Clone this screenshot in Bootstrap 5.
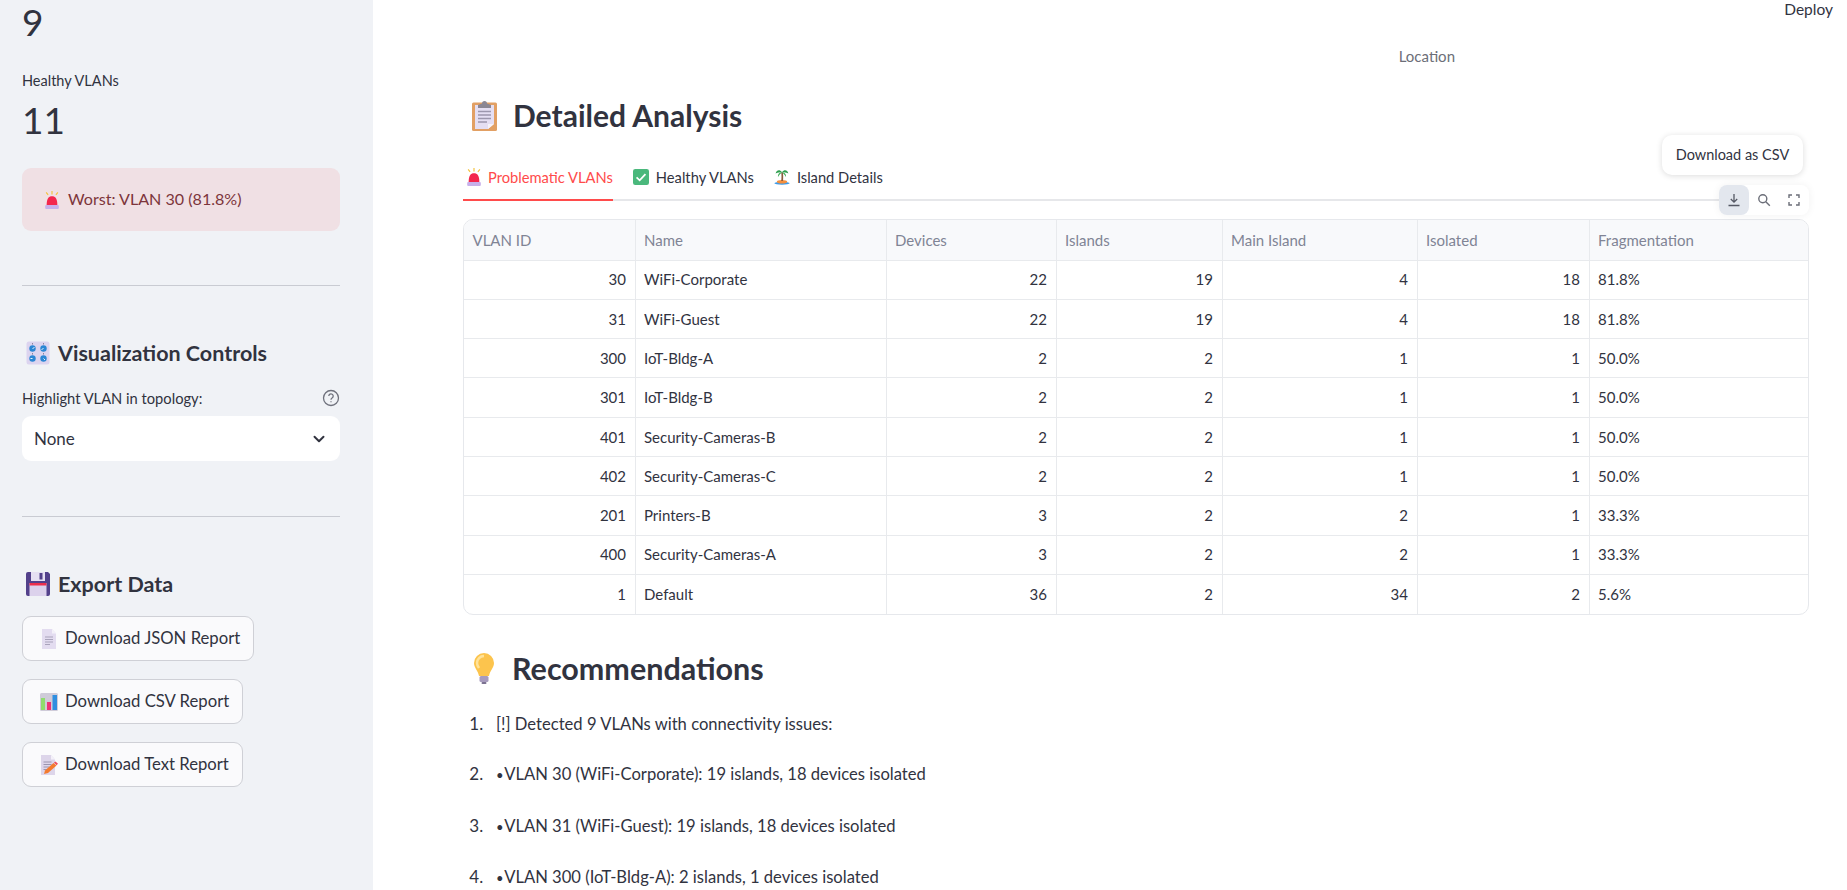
<!DOCTYPE html>
<html lang="en">
<head>
  <meta charset="UTF-8">
  <title>VLAN Analysis</title>
  <link href="https://cdn.jsdelivr.net/npm/bootstrap@5.3.2/dist/css/bootstrap.min.css" rel="stylesheet">
  <style>
    html, body { height: 100%; overflow: hidden; }
    body { font-family: "Lato", "Liberation Sans", sans-serif; color: #31333f; background: #fff; }

    .side-panel { width: 373px; height: 890px; flex: none; background: #f0f2f6; padding: 0 33px 0 22px; overflow: hidden; }
    .metric-num { font-size: 37px; line-height: 40px; color: #31333f; }
    .metric-label { font-size: 14.5px; line-height: 20px; color: #31333f; margin-top: 29px; }
    .first-num { margin-top: 2px; }
    .second-num { margin-top: 9px; }
    .alert-worst { height: 63px; margin: 28px 0 0; padding: 0 23px; background: #f0e0e4; color: #7d353b; border: 0; border-radius: 9px; font-size: 16.1px; display: flex; align-items: center; gap: 9px; }
    .side-rule { margin: 0; border: 0; border-top: 1px solid #c9cbd2; opacity: 1; }
    .rule-one { margin-top: 54px; }
    .rule-two { margin-top: 55px; }
    .side-head { font-size: 21.5px; font-weight: 700; line-height: 28px; padding-left: 4px; gap: 8px; margin-top: 53px; }
    .field-label { font-size: 14.7px; line-height: 20px; color: #31333f; margin-top: 21px; margin-bottom: 8px; }
    .form-select.vlan-pick { height: 45px; border: 0; border-radius: 9px; font-size: 17px; padding: 0 12px; color: #31333f; background-position: right 13px center; background-size: 16px 12px;
      background-image: url("data:image/svg+xml,%3csvg xmlns='http://www.w3.org/2000/svg' viewBox='0 0 16 16'%3e%3cpath fill='none' stroke='%2331333f' stroke-linecap='round' stroke-linejoin='round' stroke-width='2.6' d='m2 5 6 6 6-6'/%3e%3c/svg%3e"); }
    .report-stack { gap: 18px; margin-top: 18px; }
    .btn.report-btn { height: 45px; padding: 0 13px 0 18px; background: #fafafc; border: 1px solid #cfd0d6; border-radius: 9px; color: #31333f; font-size: 16.7px; gap: 8px; }
    .emoji-slot { width: 16px; display: flex; justify-content: center; }
    .emoji-slot svg { flex: none; }

    .main-pane { position: relative; padding: 0 38px 0 90px; }
    .deploy-link { position: absolute; top: -1px; right: 14px; font-size: 15.5px; line-height: 20px; color: #31333f; }
    .axis-label { padding: 46px 354px 0 0; font-size: 15px; line-height: 20px; color: #6c6e78; text-align: right; }
    .page-head { font-size: 30.5px; font-weight: 700; line-height: 40px; padding-left: 9px; gap: 16px; }
    .head-analysis { margin-top: 29px; font-size: 30px; }
    .head-recs { margin-top: 33px; }

    .nav.result-tabs { border-bottom: 2px solid #e6e7ea; gap: 20px; height: 46px; margin-top: 20px; font-size: 14.7px; }
    .result-tabs .nav-link { padding: 0; height: 46px; color: #31333f; gap: 7px; border-bottom: 2px solid transparent; }
    .result-tabs .nav-link.active { color: #ff4b4b; border-bottom-color: #ff4b4b; padding-left: 4px; }

    .grid-wrap { margin-top: 18px; border: 1px solid #e6e8ec; border-radius: 10px; overflow: hidden; }
    .table.vlan-grid { table-layout: fixed; margin: 0; font-size: 15px; color: #31333f; }
    .vlan-grid th, .vlan-grid td { height: 39.3px; padding: 0 8.5px; vertical-align: middle; border: 0; border-right: 1px solid #e8eaed; border-bottom: 1px solid #e8eaed; }
    .vlan-grid th:last-child, .vlan-grid td:last-child { border-right: 0; }
    .vlan-grid tr:last-child td { border-bottom: 0; }
    .vlan-grid th { height: 40px; background: #f8f9fb; color: #808495; font-weight: 400; }
    .vlan-grid th:nth-child(1) { width: 171px; }
    .vlan-grid th:nth-child(2) { width: 251px; }
    .vlan-grid th:nth-child(3) { width: 170px; }
    .vlan-grid th:nth-child(4) { width: 166px; }
    .vlan-grid th:nth-child(5) { width: 195px; }
    .vlan-grid th:nth-child(6) { width: 172px; }

    .grid-tools { position: absolute; top: 185px; right: 38px; height: 30px; background: #fff; border-radius: 8px; box-shadow: 0 0 8px rgba(0,0,0,.06); }
    .grid-tools span { width: 30px; height: 30px; border-radius: 8px; display: flex; align-items: center; justify-content: center; }
    .grid-tools span.on { background: #e3e7ee; }
    .tip-csv { position: absolute; top: 135px; right: 44px; height: 40px; width: 141px; background: #fff; border-radius: 10px; box-shadow: 0 1px 6px rgba(0,0,0,.14); font-size: 14.5px; display: flex; align-items: center; justify-content: center; }

    .rec-list { margin: 22px 0 0; padding-left: 33px; font-size: 16.6px; line-height: 28px; }
    .rec-list li { margin-bottom: 22.5px; }
    .rec-list li::marker { content: counter(list-item) ".\2003"; font-size: 17px; }
    .dot-mark { font-size: 13px; margin-right: -3px; }
  </style>
</head>
<body>

<svg width="0" height="0" class="d-block position-absolute">
  <symbol id="e-siren" viewBox="3 1 14 18.500">
    <rect x="3" y="15.500" width="14" height="4" rx="1" fill="#c7b0ea"/>
    <path d="M4.500 15.500 C4.500 9 6.500 6.500 10 6.500 C13.500 6.500 15.500 9 15.500 15.500Z" fill="#f3274c"/>
    <path d="M10 1v3.500M4 2.500l2 2.500M16 2.500l-2 2.500" stroke="#f4c33f" stroke-width="1.200" fill="none"/>
  </symbol>
  <symbol id="e-check" viewBox="1 1 18 18">
    <rect x="1" y="1" width="18" height="18" rx="2.500" fill="#4ab87c"/>
    <path d="M5 10.500l3.500 3.200L15 6.800" stroke="#fff" stroke-width="2" fill="none"/>
  </symbol>
  <symbol id="e-palm" viewBox="0 0 20 20">
    <ellipse cx="10" cy="17.800" rx="9.500" ry="1.800" fill="#3d9be9"/>
    <ellipse cx="10" cy="15.800" rx="6.500" ry="2.200" fill="#f58f3c"/>
    <path d="M9 15 C9.500 11 9.500 8 9 4h2c.6 3 .6 7 .3 11Z" fill="#8a5a3c"/>
    <path d="M10 4 C7 0 3.500 1 2 5.500 C5 4 7.500 4 10 4Z M10 4 C13 0 16.500 1 18 5.500 C15 4 12.500 4 10 4Z" fill="#2f9e4f"/>
    <path d="M10 4 C7 4 4.500 6.500 5 10 C6.500 7 8.500 5.500 10 4Z M10 4 C13 4 15.500 6.500 15 10 C13.500 7 11.500 5.500 10 4Z" fill="#3fae58"/>
  </symbol>
  <symbol id="e-clip" viewBox="0 0 25 31">
    <rect x="0" y="2.500" width="25" height="28.500" rx="1.500" fill="#e2a064"/>
    <path d="M3 5h19v19l-6 5H3Z" fill="#e5dff3"/>
    <path d="M16 29l6-5h-6Z" fill="#f6f3fb"/>
    <path d="M10 3.500a2.500 2.500 0 0 1 5 0L19 5v3H6V5Z" fill="#8b8794"/>
    <path d="M6 11.500h13M6 15h13M6 18.500h13M6 22h9" stroke="#9c97ad" stroke-width="1.300"/>
  </symbol>
  <symbol id="e-bulb" viewBox="0 0 24 32">
    <path d="M12 1a10 10 0 0 0-10 10c0 5 4 7.500 5 13h10c1-5.500 5-8 5-13A10 10 0 0 0 12 1Z" fill="#fcc44d"/>
    <path d="M12 4a7 7 0 0 0-7 7c0 2 1 3.500 2 5" stroke="#ffe39a" stroke-width="2.500" fill="none"/>
    <rect x="7.500" y="24" width="9" height="6" rx="1.500" fill="#a79bbd"/>
    <rect x="9.500" y="30" width="5" height="2" rx="1" fill="#7b7191"/>
  </symbol>
  <symbol id="e-knobs" viewBox="0 0 24 24">
    <rect x="0.500" y="0.500" width="23" height="23" rx="2.500" fill="#dcd4ef"/>
    <g fill="#2b86d4">
      <circle cx="6.500" cy="7.500" r="3.200"/><circle cx="17.500" cy="7.500" r="3.200"/>
      <circle cx="6.500" cy="17.500" r="3.200"/><circle cx="17.500" cy="17.500" r="3.200"/>
    </g>
    <path d="M6.500 2v1.500M17.500 2v1.500M6.500 12v1.500M17.500 12v1.500" stroke="#8b85a0" stroke-width="1"/>
    <path d="M6.500 7.500l2-1M17.500 7.500l-2 1M6.500 17.500h-2M17.500 17.500l1.500 1.500" stroke="#e5f2fc" stroke-width="1"/>
  </symbol>
  <symbol id="e-floppy" viewBox="0 0 24 24">
    <path d="M2 0h20l2 2v20a2 2 0 0 1-2 2H2a2 2 0 0 1-2-2V2a2 2 0 0 1 2-2Z" fill="#53418b"/>
    <rect x="5" y="0" width="14" height="9" fill="#e6e0f2"/>
    <rect x="13.500" y="1" width="3" height="6.500" fill="#53418b"/>
    <rect x="3.500" y="11" width="17" height="13" fill="#dcd2ec"/>
    <rect x="3.500" y="11" width="17" height="2.500" fill="#ec2f4c"/>
  </symbol>
  <symbol id="e-page" viewBox="0 0 16 20">
    <path d="M1 0h10l4 4.500V20H1Z" fill="#e3dcf0"/>
    <path d="M11 0l4 4.500h-4Z" fill="#f4f1f9"/>
    <path d="M4 8h8M4 10.500h8M4 13h8M4 15.500h5" stroke="#a9a3bb" stroke-width="1"/>
  </symbol>
  <symbol id="e-bars" viewBox="0 0 18 18">
    <rect x="0" y="0" width="18" height="18" rx="1.500" fill="#cfcbd9"/>
    <rect x="1" y="5" width="4" height="12" fill="#8fdc6e"/>
    <rect x="7" y="9" width="4" height="8" fill="#ee3377"/>
    <rect x="12.500" y="2" width="4.500" height="15" fill="#2f8ee0"/>
  </symbol>
  <symbol id="e-memo" viewBox="0 0 17 20">
    <path d="M0 0h10l4 4.500V20H0Z" fill="#ddd5ea"/>
    <path d="M10 0l4 4.500h-4Z" fill="#f4f1f9"/>
    <path d="M2.500 7h8M2.500 9.500h8M2.500 12h6M2.500 14.500h4" stroke="#9b94ae" stroke-width="1"/>
    <path d="M3 19l1-3.500L12.500 8l3 2.500L7 18Z" fill="#f47b2f"/>
    <path d="M13 7.500l1.500-1 2.500 2.200-1.500 1.500Z" fill="#ef4d5c"/>
  </symbol>
</svg>

<div class="d-flex">
  <!-- Sidebar -->
  <aside class="side-panel d-flex flex-column">
    <div class="metric-num first-num">9</div>
    <div class="metric-label">Healthy VLANs</div>
    <div class="metric-num second-num">11</div>
    <div class="alert alert-worst"><svg width="14" height="18"><use href="#e-siren"/></svg>Worst: VLAN 30 (81.8%)</div>
    <hr class="side-rule rule-one">

    <div class="side-head d-flex align-items-center"><svg width="24" height="24"><use href="#e-knobs"/></svg>Visualization Controls</div>
    <div class="field-label d-flex justify-content-between align-items-center">
      <span>Highlight VLAN in topology:</span>
      <svg width="18" height="18" viewBox="0 0 18 18" fill="none" stroke="#6f717c" stroke-width="1.300"><circle cx="9" cy="9" r="7.500"/><path d="M6.800 7a2.200 2.200 0 1 1 3.300 2c-.8.500-1.100.9-1.100 1.700M9 12.300v1"/></svg>
    </div>
    <select class="form-select vlan-pick"><option>None</option></select>
    <hr class="side-rule rule-two">

    <div class="side-head d-flex align-items-center"><svg width="24" height="24"><use href="#e-floppy"/></svg>Export Data</div>
    <div class="report-stack d-flex flex-column align-items-start">
      <button class="btn report-btn d-flex align-items-center"><span class="emoji-slot"><svg width="16" height="20"><use href="#e-page"/></svg></span>Download JSON Report</button>
      <button class="btn report-btn d-flex align-items-center"><span class="emoji-slot"><svg width="18" height="18"><use href="#e-bars"/></svg></span>Download CSV Report</button>
      <button class="btn report-btn d-flex align-items-center"><span class="emoji-slot"><svg width="17" height="20"><use href="#e-memo"/></svg></span>Download Text Report</button>
    </div>
  </aside>

  <!-- Main area -->
  <main class="main-pane flex-grow-1">
    <a class="deploy-link text-decoration-none" href="#">Deploy</a>
    <div class="axis-label">Location</div>

    <div class="page-head head-analysis d-flex align-items-center"><svg width="25" height="31"><use href="#e-clip"/></svg>Detailed Analysis</div>

    <ul class="nav result-tabs">
      <li class="nav-item"><a class="nav-link active d-flex align-items-center" href="#"><svg width="14" height="18"><use href="#e-siren"/></svg>Problematic VLANs</a></li>
      <li class="nav-item"><a class="nav-link d-flex align-items-center" href="#"><svg width="16" height="16"><use href="#e-check"/></svg>Healthy VLANs</a></li>
      <li class="nav-item"><a class="nav-link d-flex align-items-center" href="#"><svg width="16" height="18"><use href="#e-palm"/></svg>Island Details</a></li>
    </ul>

    <div class="tip-csv">Download as CSV</div>
    <div class="grid-tools d-flex">
      <span class="on"><svg width="14" height="14" viewBox="0 0 14 14" fill="none" stroke="#555864" stroke-width="1.300"><path d="M7 1v8M3.800 6L7 9.200 10.200 6M1.500 12.500h11"/></svg></span>
      <span><svg width="14" height="14" viewBox="0 0 14 14" fill="none" stroke="#6b6e78" stroke-width="1.400"><circle cx="5.800" cy="5.800" r="4"/><path d="M8.800 8.800l4 4"/></svg></span>
      <span><svg width="12" height="12" viewBox="0 0 12 12" fill="none" stroke="#6b6e78" stroke-width="1.400"><path d="M1 4V1h3M8 1h3v3M11 8v3H8M4 11H1V8"/></svg></span>
    </div>

    <div class="grid-wrap">
      <table class="table vlan-grid">
        <thead>
          <tr><th>VLAN ID</th><th>Name</th><th>Devices</th><th>Islands</th><th>Main Island</th><th>Isolated</th><th>Fragmentation</th></tr>
        </thead>
        <tbody>
          <tr><td class="text-end">30</td><td>WiFi-Corporate</td><td class="text-end">22</td><td class="text-end">19</td><td class="text-end">4</td><td class="text-end">18</td><td>81.8%</td></tr>
          <tr><td class="text-end">31</td><td>WiFi-Guest</td><td class="text-end">22</td><td class="text-end">19</td><td class="text-end">4</td><td class="text-end">18</td><td>81.8%</td></tr>
          <tr><td class="text-end">300</td><td>IoT-Bldg-A</td><td class="text-end">2</td><td class="text-end">2</td><td class="text-end">1</td><td class="text-end">1</td><td>50.0%</td></tr>
          <tr><td class="text-end">301</td><td>IoT-Bldg-B</td><td class="text-end">2</td><td class="text-end">2</td><td class="text-end">1</td><td class="text-end">1</td><td>50.0%</td></tr>
          <tr><td class="text-end">401</td><td>Security-Cameras-B</td><td class="text-end">2</td><td class="text-end">2</td><td class="text-end">1</td><td class="text-end">1</td><td>50.0%</td></tr>
          <tr><td class="text-end">402</td><td>Security-Cameras-C</td><td class="text-end">2</td><td class="text-end">2</td><td class="text-end">1</td><td class="text-end">1</td><td>50.0%</td></tr>
          <tr><td class="text-end">201</td><td>Printers-B</td><td class="text-end">3</td><td class="text-end">2</td><td class="text-end">2</td><td class="text-end">1</td><td>33.3%</td></tr>
          <tr><td class="text-end">400</td><td>Security-Cameras-A</td><td class="text-end">3</td><td class="text-end">2</td><td class="text-end">2</td><td class="text-end">1</td><td>33.3%</td></tr>
          <tr><td class="text-end">1</td><td>Default</td><td class="text-end">36</td><td class="text-end">2</td><td class="text-end">34</td><td class="text-end">2</td><td>5.6%</td></tr>
        </tbody>
      </table>
    </div>

    <div class="page-head head-recs d-flex align-items-center"><svg width="24" height="32"><use href="#e-bulb"/></svg>Recommendations</div>

    <ol class="rec-list">
      <li>[!] Detected 9 VLANs with connectivity issues:</li>
      <li><span class="dot-mark">•</span> VLAN 30 (WiFi-Corporate): 19 islands, 18 devices isolated</li>
      <li><span class="dot-mark">•</span> VLAN 31 (WiFi-Guest): 19 islands, 18 devices isolated</li>
      <li><span class="dot-mark">•</span> VLAN 300 (IoT-Bldg-A): 2 islands, 1 devices isolated</li>
    </ol>
  </main>
</div>

<script src="https://cdn.jsdelivr.net/npm/bootstrap@5.3.2/dist/js/bootstrap.bundle.min.js"></script>
</body>
</html>
